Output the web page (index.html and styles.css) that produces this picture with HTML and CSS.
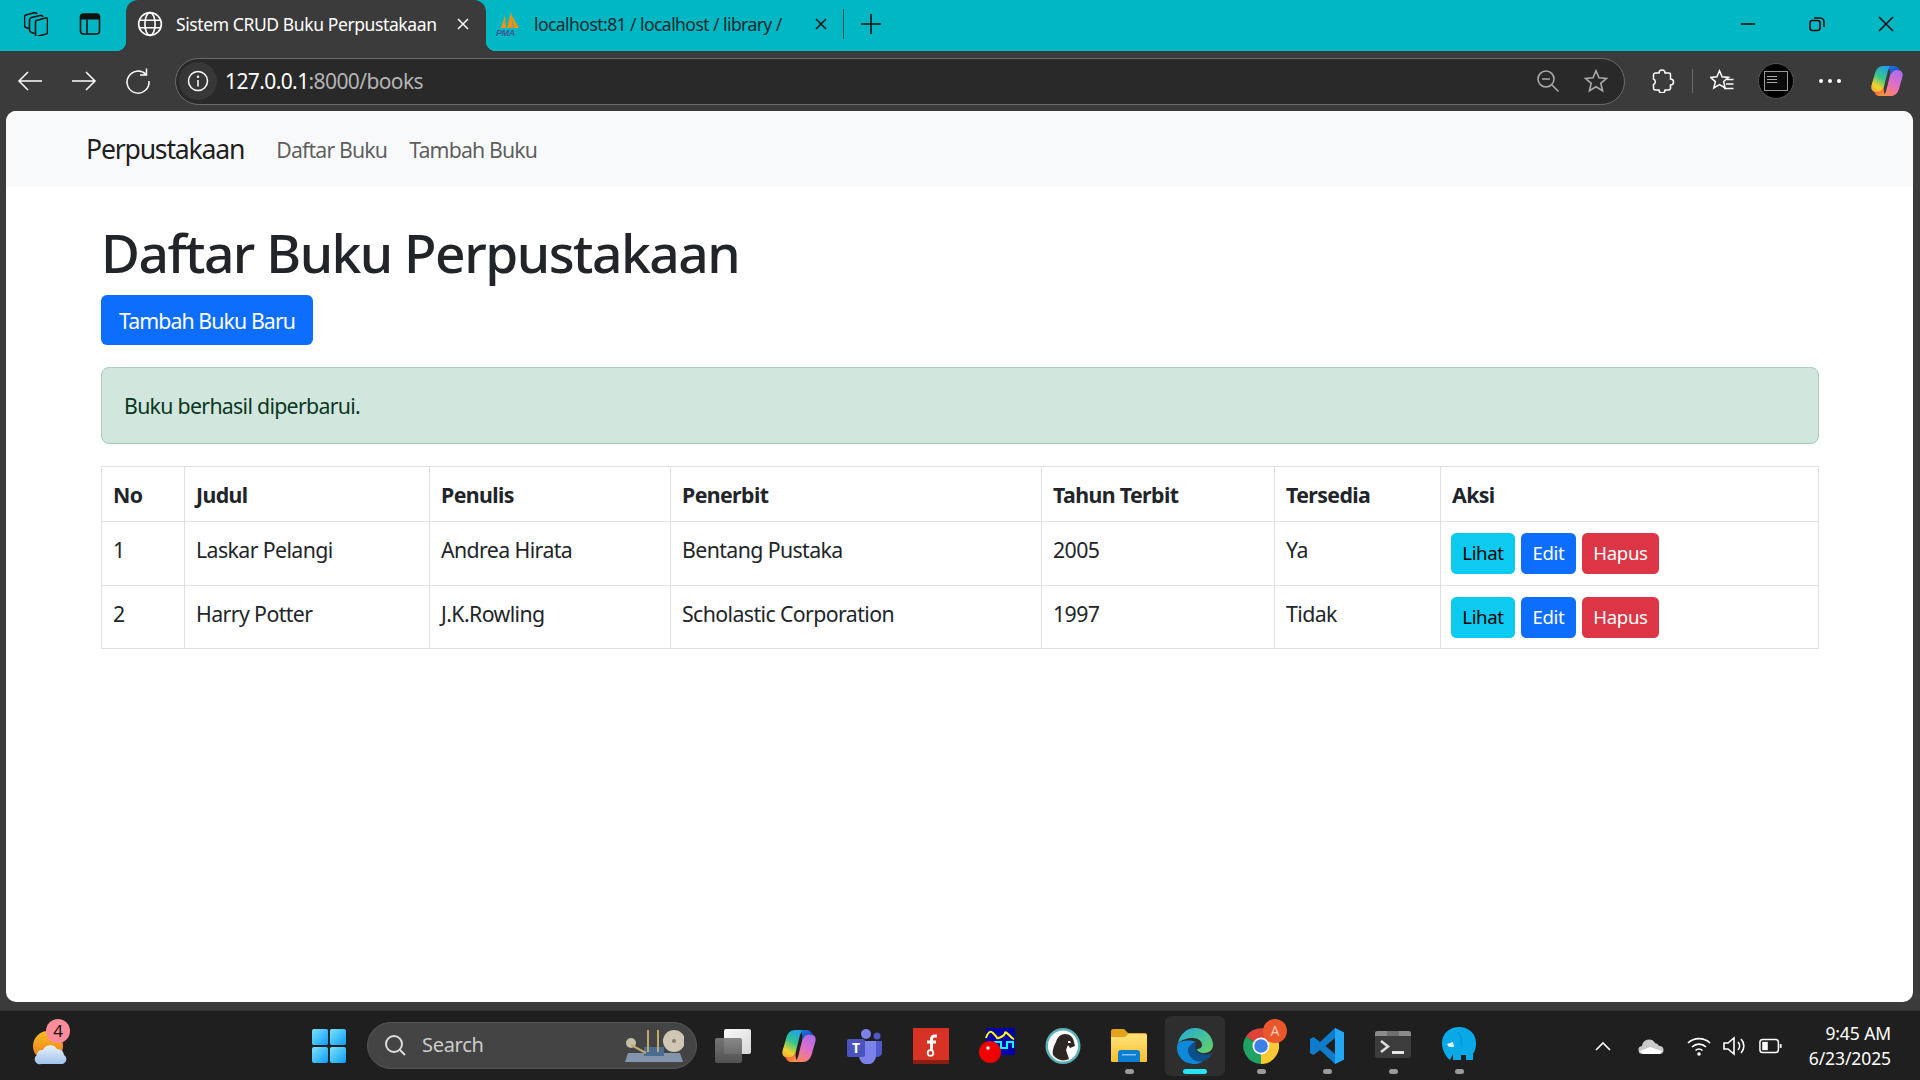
FILE: index.html
```html
<!DOCTYPE html>
<html lang="id">
<head>
<meta charset="utf-8">
<title>Sistem CRUD Buku Perpustakaan</title>
<link rel="stylesheet" href="styles.css">
</head>
<body>
<svg class="defs" width="0" height="0" aria-hidden="true">
  <defs>
    <linearGradient id="cpA" x1=".7" y1="0" x2=".2" y2="1"><stop offset="0" stop-color="#1d9df0"/><stop offset=".45" stop-color="#34c58f"/><stop offset=".8" stop-color="#f4d22a"/><stop offset="1" stop-color="#f7a93a"/></linearGradient>
    <linearGradient id="cpB" x1=".8" y1="0" x2=".3" y2="1"><stop offset="0" stop-color="#a56cf0"/><stop offset=".55" stop-color="#e46fc3"/><stop offset="1" stop-color="#fb8a55"/></linearGradient>
    <linearGradient id="cpD" x1="0" y1="0" x2="1" y2="1"><stop offset="0" stop-color="#1b7ae0"/><stop offset="1" stop-color="#1c3fb8"/></linearGradient>
    <linearGradient id="cpC" x1="0" y1="0" x2="1" y2="1"><stop offset="0" stop-color="#f2482f"/><stop offset="1" stop-color="#f8a24a"/></linearGradient>
    <linearGradient id="wn" x1="0" y1="0" x2="1" y2="1"><stop offset="0" stop-color="#79e4fb"/><stop offset="1" stop-color="#0f9bf5"/></linearGradient>
    <linearGradient id="eg" x1="0" y1="0" x2="1" y2="1"><stop offset="0" stop-color="#1fa9e0"/><stop offset="1" stop-color="#67d45e"/></linearGradient>
    <linearGradient id="sun" x1="0" y1="0" x2="0" y2="1"><stop offset="0" stop-color="#f9bd2a"/><stop offset="1" stop-color="#ee7412"/></linearGradient>
    <linearGradient id="cld" x1="0" y1="0" x2="0" y2="1"><stop offset="0" stop-color="#e9f2fc"/><stop offset="1" stop-color="#9fc1ee"/></linearGradient>
    <linearGradient id="fd" x1="0" y1="0" x2="0" y2="1"><stop offset="0" stop-color="#ffe27a"/><stop offset="1" stop-color="#f8c02c"/></linearGradient>
    <linearGradient id="tvA" x1="0" y1="0" x2="1" y2="1"><stop offset="0" stop-color="#fafafa"/><stop offset="1" stop-color="#d6d6d6"/></linearGradient>
    <linearGradient id="tvB" x1="0" y1="0" x2="0" y2="1"><stop offset="0" stop-color="#7d7d7d" stop-opacity=".9"/><stop offset="1" stop-color="#555" stop-opacity=".95"/></linearGradient>
    <symbol id="copilot" viewBox="0 0 36 36">
      <path d="M14 2H25C21 2 19.500 5 18.500 9L15 23C14 28 12 30 8 30 3 30 .5 27 1.500 23L5.500 9C7 5 9.500 2 14 2Z" fill="url(#cpA)"/>
      <path d="M22 34H11C15 34 16.500 31 17.500 27L21 13C22 8 24 6 28 6 33 6 35.500 9 34.500 13L30.500 27C29 31 26.500 34 22 34Z" fill="url(#cpB)"/>
      <path d="M20 2h5c3.500 0 6 2 6.500 5-4-1.500-8 0-10 5C21.500 8 21 4 20 2Z" fill="url(#cpD)"/>
      <path d="M16 34h-5c-3.500 0-6-2-6.500-5 4 1.500 8 0 10-5 0 4 .5 8 1.500 10Z" fill="url(#cpC)"/>
    </symbol>
  </defs>
</svg>

<div class="tabstrip">
  <button class="strip-btn" aria-label="Koleksi">
    <svg class="ico24" viewBox="0 0 24 24"><g class="ln-dark"><path d="M12.500 8.500l9-2.500q2-.5 2 1.500v12.500q0 1.500-1.500 2l-9 2.500q-1.500.3-1.500-1.500V10.500q0-1.500.5-2z"/><path d="M10.500 21.500l-3-1Q5.500 20 5.500 18V8q0-2 2-2.500L16 3.500q2-.5 3 1.500"/><path d="M5.500 16.500 2 15.500Q.5 15 .5 13V5q0-1.500 1.500-2L10 .8q2-.5 3 1.200"/></g></svg>
  </button>
  <button class="strip-btn" aria-label="Tab vertikal">
    <svg class="ico24" viewBox="0 0 24 24"><rect x="2.500" y="2" width="19" height="20" rx="3" class="ln-dark"/><path d="M2.500 7.500V5a3 3 0 0 1 3-3h13a3 3 0 0 1 3 3v2.500z" fill="#111"/><path d="M9 7.500V22" class="ln-dark"/></svg>
  </button>
  <div class="tab tab-active">
    <svg class="tab-fav" viewBox="0 0 24 24"><g class="ln-light"><circle cx="12" cy="12" r="10.500"/><ellipse cx="12" cy="12" rx="4.700" ry="10.500"/><path d="M2.200 8.500h19.600M2.200 15.500h19.600"/></g></svg>
    <span class="tab-title">Sistem CRUD Buku Perpustakaan</span>
    <svg class="ico-close" viewBox="0 0 14 14"><path d="M2 2l10 10M12 2 2 12" stroke="#fff" stroke-width="1.500"/></svg>
  </div>
  <div class="tab tab-idle">
    <svg class="pma" viewBox="0 0 26 26"><path d="M6 17 10 4l1 13zM12 17 16 1l2 16zM19 17l-3-14 8 14z" fill="#f29111"/><text x="1" y="25" class="pma-text">PMA</text></svg>
    <span class="tab-title tab-title-dark">localhost:81 / localhost / library /</span>
    <svg class="ico-close" viewBox="0 0 14 14"><path d="M2 2l10 10M12 2 2 12" stroke="#111" stroke-width="1.500"/></svg>
  </div>
  <span class="tab-sep"></span>
  <button class="new-tab" aria-label="Tab baru">
    <svg class="ico24" viewBox="0 0 24 24"><path d="M12 2v20M2 12h20" stroke="#111" stroke-width="1.600"/></svg>
  </button>
  <div class="win-controls">
    <button class="win-btn" aria-label="Minimalkan"><svg class="ico18" viewBox="0 0 18 18"><path d="M2 9h14" stroke="#111" stroke-width="1.600"/></svg></button>
    <button class="win-btn" aria-label="Pulihkan"><svg class="ico18" viewBox="0 0 18 18"><rect x="2" y="5.500" width="10" height="10" rx="2.500" fill="none" stroke="#111" stroke-width="1.600"/><path d="M6 3h6a4 4 0 0 1 4 4v5" fill="none" stroke="#111" stroke-width="1.600"/></svg></button>
    <button class="win-btn" aria-label="Tutup"><svg class="ico18" viewBox="0 0 18 18"><path d="M2 2l14 14M16 2 2 16" stroke="#111" stroke-width="1.600"/></svg></button>
  </div>
</div>

<div class="toolbar">
  <button class="tool-btn" aria-label="Kembali"><svg class="ico28" viewBox="0 0 28 28"><path d="M26 14H3M12 5l-9 9 9 9" class="ln-light"/></svg></button>
  <button class="tool-btn" aria-label="Maju"><svg class="ico28" viewBox="0 0 28 28"><path d="M2 14h23M16 5l9 9-9 9" class="ln-light"/></svg></button>
  <button class="tool-btn" aria-label="Muat ulang"><svg class="ico28" viewBox="0 0 28 28"><path d="M22 7.500A11 11 0 1 0 25 14" class="ln-light"/><path d="M22.500 1.500v6.500h-6.500" class="ln-light"/></svg></button>
  <div class="address">
    <span class="addr-info"><svg class="ico22" viewBox="0 0 22 22"><circle cx="11" cy="11" r="9.500" class="ln-light"/><path d="M11 10v6.500" class="ln-light"/><circle cx="11" cy="6.800" r="1.200" fill="#fff"/></svg></span>
    <span class="addr-host">127.0.0.1</span><span class="addr-path">:8000/books</span>
    <span class="addr-right">
      <svg class="ico24" viewBox="0 0 24 24"><g class="ln-grey"><circle cx="10" cy="10" r="8"/><path d="M6 10h8M16 16l6.500 6.500"/></g></svg>
      <svg class="ico24" viewBox="0 0 24 24"><path d="M12 1.800l3 7 7.500.6-5.700 4.900 1.800 7.400-6.600-4-6.600 4 1.800-7.400L1.500 9.400 9 8.800z" class="ln-grey"/></svg>
    </span>
  </div>
  <button class="tool-btn" aria-label="Ekstensi"><svg class="ico24" viewBox="2 0 24 24"><path d="M9 4a3 3 0 0 1 6 0h4a1.500 1.500 0 0 1 1.500 1.500V10a3 3 0 0 1 0 6v3.500A2 2 0 0 1 18.500 21H15a3 3 0 0 1-6 0H5.500A2 2 0 0 1 3.500 19v-3.500a3 3 0 0 0 0-5.500V6a2 2 0 0 1 2-2z" class="ln-light"/></svg></button>
  <span class="tool-sep"></span>
  <button class="tool-btn" aria-label="Favorit"><svg class="ico24" viewBox="0 0 24 24"><path d="M9.500 1.800l2.600 6 6.400.6-4.900 4.200 1.500 6.400-5.600-3.400-5.700 3.400 1.600-6.400L.5 8.400l6.400-.6zM17 10.500h6.500M16 15h7.500M14 19.500h9.500" class="ln-light"/></svg></button>
  <button class="tool-btn" aria-label="Profil"><span class="profile"><span class="profile-screen"><span class="profile-lines"></span></span></span></button>
  <button class="tool-btn" aria-label="Lainnya"><span class="dots"><i></i><i></i><i></i></span></button>
  <button class="tool-btn tool-copilot" aria-label="Copilot"><svg class="ico34"><use href="#copilot"/></svg></button>
</div>

<main class="page">
  <nav class="navbar">
    <a class="brand" href="#">Perpustakaan</a>
    <a class="nav-link" href="#">Daftar Buku</a>
    <a class="nav-link" href="#">Tambah Buku</a>
  </nav>
  <div class="content">
    <h1>Daftar Buku Perpustakaan</h1>
    <a class="btn btn-primary btn-lg" href="#">Tambah Buku Baru</a>
    <div class="alert">Buku berhasil diperbarui.</div>
    <table class="table">
      <colgroup>
        <col class="c1"><col class="c2"><col class="c3"><col class="c4"><col class="c5"><col class="c6"><col class="c7">
      </colgroup>
      <thead>
        <tr class="row-head"><th>No</th><th>Judul</th><th>Penulis</th><th>Penerbit</th><th>Tahun Terbit</th><th>Tersedia</th><th>Aksi</th></tr>
      </thead>
      <tbody>
        <tr class="row-a">
          <td>1</td><td>Laskar Pelangi</td><td>Andrea Hirata</td><td>Bentang Pustaka</td><td>2005</td><td>Ya</td>
          <td class="actions"><a class="btn btn-info" href="#">Lihat</a><a class="btn btn-primary" href="#">Edit</a><a class="btn btn-danger" href="#">Hapus</a></td>
        </tr>
        <tr class="row-b">
          <td>2</td><td>Harry Potter</td><td>J.K.Rowling</td><td>Scholastic Corporation</td><td>1997</td><td>Tidak</td>
          <td class="actions"><a class="btn btn-info" href="#">Lihat</a><a class="btn btn-primary" href="#">Edit</a><a class="btn btn-danger" href="#">Hapus</a></td>
        </tr>
      </tbody>
    </table>
  </div>
</main>
<div class="frame-bottom"></div>

<footer class="taskbar">
  <div class="weather">
    <svg class="ico38" viewBox="0 0 38 38"><circle cx="18" cy="19" r="15" fill="url(#sun)"/><path d="M11 37a5 5 0 0 1-4-9 5 5 0 0 1 6-5 8 8 0 0 1 14-1 6.500 6.500 0 0 1 7 6 5 5 0 0 1-1 9z" fill="url(#cld)"/></svg>
    <span class="weather-badge">4</span>
  </div>
  <div class="tb-item"><svg class="ico34" viewBox="0 0 36 36"><g fill="url(#wn)"><rect x="0" y="0" width="17" height="17" rx="2"/><rect x="19" y="0" width="17" height="17" rx="2"/><rect x="0" y="19" width="17" height="17" rx="2"/><rect x="19" y="19" width="17" height="17" rx="2"/></g></svg></div>
  <div class="search">
    <svg class="ico22 search-ico" viewBox="0 0 22 22"><circle cx="10" cy="10" r="8" fill="none" stroke="#ddd" stroke-width="2"/><path d="M16 16l5 5" stroke="#ddd" stroke-width="2"/></svg>
    <span class="search-text">Search</span>
    <svg class="search-art" viewBox="0 0 60 36"><path d="M4 26h52l3 9H1z" fill="#8295ad"/><rect x="20" y="20" width="20" height="9" fill="#4b6d94"/><circle cx="50" cy="14" r="11" fill="#cfc7b3"/><circle cx="50" cy="14" r="2" fill="#887e6a"/><circle cx="7" cy="16" r="5" fill="#c6bda8"/><path d="M7 18l15 8M24 3v22M34 3v22" stroke="#bca96e" stroke-width="2"/></svg>
  </div>
  <div class="tb-apps">
    <div class="tb-item"><svg class="ico36" viewBox="0 0 36 36"><rect x="9" y="1" width="27" height="25" rx="2" fill="url(#tvA)"/><rect x="0" y="10" width="27" height="25" rx="2" fill="url(#tvB)"/></svg></div>
    <div class="tb-item"><svg class="ico36"><use href="#copilot"/></svg></div>
    <div class="tb-item"><svg class="ico36" viewBox="0 0 36 36"><circle cx="19" cy="6" r="5" fill="#7b83eb"/><circle cx="30" cy="8" r="3.500" fill="#5059c9"/><path d="M25 13h10v11a5 5 0 0 1-9 3z" fill="#5059c9"/><path d="M12 13h17v15a8.500 8.500 0 0 1-17 0z" fill="#7b83eb"/><rect x="0" y="11" width="18" height="18" rx="2" fill="#4b53bc"/><text x="9" y="25" class="teams-t">T</text></svg></div>
    <div class="tb-item"><svg class="ico36" viewBox="0 0 36 36"><rect width="36" height="36" fill="#d63324"/><rect y="32" width="36" height="4" fill="#8c1d14"/><path d="M24 8h-2.500a3 3 0 0 0-3 3v12M14 14h9" stroke="#fff" stroke-width="3" fill="none"/><circle cx="17.500" cy="25" r="2.800" fill="none" stroke="#fff" stroke-width="1.800"/></svg></div>
    <div class="tb-item"><svg class="ico36" viewBox="0 0 36 36"><rect x="7" width="29" height="27" fill="#0000a8"/><path d="M7 10q3-9 7-5t4 5 4-1 4-4 4 2 5 4" stroke="#ff0" stroke-width="2" fill="none"/><path d="M16 20v-6h6v6h6v-6h6v6" stroke="#0ff" stroke-width="2" fill="none"/><circle cx="11" cy="24" r="11" fill="#f00000"/><circle cx="9" cy="20" r="1.800" fill="#fff"/></svg></div>
    <div class="tb-item"><svg class="ico36" viewBox="0 0 36 36"><ellipse cx="18" cy="18" rx="17.500" ry="18" fill="#5bb3b8"/><ellipse cx="18" cy="18" rx="15" ry="15.500" fill="#fff"/><path d="M8 27c-1-5 1-9 3-13 1-4 4-8 9-8 5 0 8 3 9 8l1 4-5 2-2-3-2 5 3 9c-6 3-12 1-16-4z" fill="#2e2622"/><path d="M23 13l2 0 1 2-3 0z" fill="#fff"/></svg></div>
    <div class="tb-item tb-open"><svg class="ico36" viewBox="0 0 36 36"><path d="M0 3a2 2 0 0 1 2-2h11l4 4h17a2 2 0 0 1 2 2v26H0z" fill="#e3a21a"/><path d="M0 9h14l3-3h17a2 2 0 0 1 2 2v25a1 1 0 0 1-1 1H1a1 1 0 0 1-1-1z" fill="url(#fd)"/><path d="M7 34V25a3 3 0 0 1 3-3h16a3 3 0 0 1 3 3v9z" fill="#0f7dd0"/><rect x="11" y="26" width="14" height="1.500" fill="#7fc3f2"/></svg></div>
    <div class="tb-item tb-active"><svg class="ico36" viewBox="0 0 36 36"><path d="M1 15C3 6 10 0 18 0c10 0 18 8 18 17 0 5-4 8-9 8-4 0-7-2-7-4 2 0 5-1 5-4 0-4-4-7-9-7-6 0-12 2-15 5z" fill="url(#eg)"/><path d="M1 15C-1 19 0 25 3 29c3 5 9 7 15 7 3 0 6-1 8-3-7 1-12-3-14-8-1-5 2-10 7-11-7-3-15-1-18 1z" fill="#0f88d8"/><path d="M11 22c0 7 7 13 15 11 4-1 8-4 9-8-3 2-6 2-9 1-6 0-9-4-7-11-5 1-8 4-8 7z" fill="#0b4f8a"/></svg></div>
    <div class="tb-item tb-open"><span class="chrome-wrap"><svg class="ico36" viewBox="0 0 36 36"><path d="M18 18 3 8.500A18 18 0 0 1 33.600 9z" fill="#dd4437"/><path d="M18 18 3 8.500A18 18 0 0 0 18 36z" fill="#1ea362"/><path d="M18 18 33.600 9A18 18 0 0 1 18 36z" fill="#fcc934"/><circle cx="18" cy="18" r="8.500" fill="#fff"/><circle cx="18" cy="18" r="6.800" fill="#3f7fe8"/></svg><span class="chrome-badge">A</span></span></div>
    <div class="tb-item tb-open"><svg class="ico36" viewBox="0 0 36 36"><path fill-rule="evenodd" d="M26 0 35 4.500V31.500L26 36 11 22 4.500 27 1 25V11L4.500 9 11 14ZM26 10 16.500 18 26 26Z" fill="#0e7ccb"/><path d="M26 0 35 4.500V31.500L26 36z" fill="#24a7f2"/></svg></div>
    <div class="tb-item tb-open"><svg class="ico-term" viewBox="0 0 36 27"><rect width="36" height="27" rx="2.500" fill="#3c3c3c"/><path d="M0 2.500A2.500 2.500 0 0 1 2.500 0h31A2.500 2.500 0 0 1 36 2.500V5H0z" fill="#8b8b8b"/><path d="M12 0h12v5H12z" fill="#6f6f6f"/><path d="M6 10l7 5.500-7 5.500" stroke="#ddd" stroke-width="2.500" fill="none"/><path d="M17 21.500h12" stroke="#eee" stroke-width="2.800"/></svg></div>
    <div class="tb-item tb-open"><svg class="ico36 elephant" viewBox="0 0 36 36"><path d="M1 17C1 7 9 1 18 1s17 6 17 16c0 5-1 8-3 11v6h-7v-5h-5v5h-8v-6l-3 6c-3-2-8-9-8-17z" fill="#09a9e8"/><path d="M17 6c3 3 4 8 3 13" stroke="#0a8ccc" fill="none"/><path d="M6 18l6-2 1 5-5 0z" fill="#e6f7ff"/></svg></div>
  </div>
  <div class="tray">
    <svg class="tray-ico tray-chev" viewBox="0 0 20 20"><path d="M3 14l7-7 7 7" class="ln-tray"/></svg>
    <svg class="tray-cloud" viewBox="0 0 26 18"><path d="M5 17a4 4 0 0 1-1-8 7 7 0 0 1 13-3 5 5 0 0 1 4 3 4 4 0 0 1 1 8z" fill="#c9c9c9"/><path d="M2 14l10-4 12 4-2 3H5z" fill="#fff"/></svg>
    <svg class="tray-ico" viewBox="0 0 24 20"><g class="ln-tray"><path d="M1 7a16 16 0 0 1 22 0M5 11a10 10 0 0 1 14 0M8.500 14.500a5 5 0 0 1 7 0"/></g><circle cx="12" cy="18" r="1.800" fill="#fff"/></svg>
    <svg class="tray-ico" viewBox="0 0 24 20"><g class="ln-tray"><path d="M1 7v6h4l6 5V2L5 7zM15 6a6 6 0 0 1 0 8M18 3a10 10 0 0 1 0 14"/></g></svg>
    <svg class="tray-ico tray-batt" viewBox="0 0 26 18"><rect x="1" y="2" width="20" height="14" rx="3" class="ln-tray"/><rect x="3.500" y="4.500" width="6" height="9" fill="#fff"/><rect x="22.500" y="7" width="2" height="4" fill="#fff"/></svg>
    <div class="clock"><span>9:45 AM</span><span>6/23/2025</span></div>
  </div>
</footer>
</body>
</html>
```

FILE: styles.css
```css
* { box-sizing: border-box; }
html, body { margin: 0; padding: 0; }
body {
  width: 1920px;
  height: 1080px;
  overflow: hidden;
  display: flex;
  flex-direction: column;
  background: #3b3b3b;
  font-family: "Noto Sans", "Open Sans", sans-serif;
  color: #212529;
}
button { background: none; border: 0; padding: 0; margin: 0; display: flex; align-items: center; justify-content: center; }
a { text-decoration: none; }
svg { display: block; flex: none; }
.defs { position: absolute; }
.ico18 { width: 18px; height: 18px; }
.ico22 { width: 22px; height: 22px; }
.ico24 { width: 24px; height: 24px; }
.ico28 { width: 28px; height: 28px; }
.ico34 { width: 34px; height: 34px; }
.ico36 { width: 36px; height: 36px; }
.ico38 { width: 38px; height: 38px; }
.ico-term { width: 36px; height: 27px; margin-top: -2px; }
.elephant { margin-top: -4px; }
.ln-dark { fill: none; stroke: #111; stroke-width: 1.6; }
.ln-light { fill: none; stroke: #fff; stroke-width: 1.5; }
.ln-grey { fill: none; stroke: #a9a9a9; stroke-width: 1.6; }
.ln-tray { fill: none; stroke: #fff; stroke-width: 1.6; }

/* tab strip */
.tabstrip {
  height: 51px;
  flex: none;
  display: flex;
  padding-left: 9px;
  background: #00b7c3;
}
.strip-btn { width: 54px; height: 48px; }
.tab { display: flex; align-items: center; height: 51px; width: 360px; font-size: 17.5px; letter-spacing: -.4px; }
.tab-active {
  position: relative;
  margin-left: 9px;
  padding: 0 16px 3px 11px;
  background: #3b3b3b;
  border-radius: 12px 12px 0 0;
  color: #fff;
}
.tab-active::before, .tab-active::after {
  content: "";
  position: absolute;
  bottom: 0;
  width: 10px;
  height: 10px;
}
.tab-active::before { left: -10px; background: radial-gradient(circle at 0 0, transparent 10px, #3b3b3b 10.5px); }
.tab-active::after { right: -10px; background: radial-gradient(circle at 100% 0, transparent 10px, #3b3b3b 10.5px); }
.tab-fav { width: 26px; height: 26px; margin-right: 13px; }
.tab-title { flex: 1; white-space: nowrap; overflow: hidden; }
.tab-title-dark { color: #0e2b2f; letter-spacing: -.55px; }
.ico-close { width: 14px; height: 14px; }
.tab-idle { width: 352px; padding: 0 10px 3px 9px; color: #111; }
.pma { width: 26px; height: 26px; margin-right: 13px; }
.pma-text { font: italic 700 9px "Liberation Sans", sans-serif; fill: #3d5a98; }
.tab-sep { width: 1px; height: 30px; margin: 9px 0 0 5px; background: #17545a; }
.new-tab { width: 54px; height: 48px; }
.win-controls { margin-left: auto; display: flex; }
.win-btn { width: 69px; height: 48px; }

/* toolbar */
.toolbar {
  height: 60px;
  flex: none;
  display: flex;
  align-items: center;
  padding: 0 6px 0 3px;
  background: #3b3b3b;
}
.tool-btn { width: 54px; height: 48px; }
.address {
  flex: 1;
  height: 47px;
  margin: 0 12px 0 10px;
  display: flex;
  align-items: center;
  padding-left: 3px;
  border: 1.5px solid #6c6c6c;
  border-radius: 24px;
  background: #292929;
  font-size: 21px;
  letter-spacing: -.6px;
}
.addr-info { width: 38px; height: 38px; margin-right: 8px; border-radius: 50%; background: #373737; display: flex; align-items: center; justify-content: center; }
.addr-host { color: #fff; }
.addr-path { color: #b4b4b4; }
.addr-right { margin-left: auto; display: flex; gap: 24px; padding-right: 16px; }
.tool-sep { width: 1px; height: 24px; margin: 0 2px 0 1px; background: #6a6a6a; }
.profile { width: 36px; height: 36px; border-radius: 50%; background: #000; border: 1px solid #555; display: flex; align-items: center; justify-content: center; }
.profile-screen { width: 24px; height: 20px; border: 1px solid #999; background: #0a0a0a; display: flex; padding: 4px 2px; }
.profile-lines { width: 10px; height: 9px; background: repeating-linear-gradient(#aaa 0 1px, transparent 1px 3px); }
.dots { display: flex; gap: 5px; }
.dots i { width: 4px; height: 4px; border-radius: 50%; background: #fff; }
.tool-copilot { margin-left: 3px; }

/* page */
.page {
  flex: none;
  height: 891px;
  margin: 0 7px 0 6px;
  background: #fff;
  border-radius: 10px;
  overflow: hidden;
}
.frame-bottom { height: 8px; flex: none; background: #3b3b3b; }
.navbar {
  height: 76px;
  display: flex;
  align-items: center;
  padding-left: 80px;
  background: #f8f9fa;
}
.brand { font-size: 26.6px; letter-spacing: -1.2px; color: rgba(0,0,0,.9); margin-right: 32px; }
.nav-link { font-size: 21.3px; letter-spacing: -.85px; color: rgba(0,0,0,.65); margin-right: 22px; }
.content { padding: 34px 94px 0 95px; font-size: 21.3px; letter-spacing: -.6px; }
h1 { margin: 0 0 10px; font-size: 53.3px; line-height: 64px; font-weight: 500; letter-spacing: -1.5px; }
.btn { display: inline-flex; align-items: center; justify-content: center; border-radius: 5.3px; }
.btn-lg { height: 50px; width: 212px; border-radius: 6px; letter-spacing: -.9px; }
.btn-primary { background: #0d6efd; color: #fff; }
.btn-info { background: #0dcaf0; color: #000; }
.btn-danger { background: #dc3545; color: #fff; }
.alert {
  margin: 22px 0;
  height: 77px;
  padding-left: 22px;
  display: flex;
  align-items: center;
  border: 1px solid #a3cfbb;
  border-radius: 8px;
  background: #d1e7dd;
  color: #0a3622;
  letter-spacing: -.7px;
}
.table { width: 1717px; table-layout: fixed; border-collapse: collapse; }
.c1 { width: 83px; } .c2 { width: 245px; } .c3 { width: 241px; } .c4 { width: 371px; }
.c5 { width: 233px; } .c6 { width: 166px; } .c7 { width: 378px; }
th, td { border: 1.33px solid #dee2e6; padding: 12px 11px 0; text-align: left; vertical-align: top; line-height: 32px; }
th { font-weight: 700; letter-spacing: -.6px; }
.row-head { height: 55px; }
.row-a { height: 64px; }
.row-b { height: 63px; }
.actions { padding: 11px 11px 0 10px; font-size: 18.6px; letter-spacing: -.35px; line-height: 1; }
.actions .btn { height: 41px; margin-right: 6px; }
.actions .btn-info { width: 64px; }
.actions .btn-primary { width: 55px; }
.actions .btn-danger { width: 77px; }

/* taskbar */
.taskbar {
  height: 70px;
  flex: none;
  display: flex;
  align-items: center;
  background: #1f1f1f;
  border-top: 1px solid #333;
}
.weather { position: relative; width: 296px; padding-left: 30px; }
.weather-badge {
  position: absolute;
  left: 46px;
  top: -8px;
  width: 24px;
  height: 24px;
  border-radius: 50%;
  background: #ff8d99;
  color: #111;
  font-size: 17px;
  line-height: 24px;
  text-align: center;
}
.tb-item { position: relative; width: 66px; height: 60px; display: flex; align-items: center; justify-content: center; border-radius: 6px; }
.search {
  width: 330px;
  height: 47px;
  margin: 0 3px 0 5px;
  display: flex;
  align-items: center;
  padding: 0 12px 2px 16px;
  border-radius: 24px;
  border: 1px solid #555;
  background: #444;
  color: #ccc;
  font-size: 20px;
  letter-spacing: -.3px;
}
.search-ico { margin-right: 16px; }
.search-art { width: 60px; height: 36px; margin-left: auto; }
.tb-apps { display: flex; align-items: center; }
.tb-open::after {
  content: "";
  position: absolute;
  left: 28.5px;
  bottom: 2px;
  width: 9px;
  height: 5px;
  border-radius: 3px;
  background: #9a9a9a;
}
.tb-active { background: #2e2e2e; width: 60px; margin: 0 3px; }
.tb-active::before {
  content: "";
  position: absolute;
  left: 18px;
  bottom: 2px;
  width: 24px;
  height: 5px;
  border-radius: 3px;
  background: #27e4f5;
}
.teams-t { font: 700 14px "Noto Sans", sans-serif; fill: #fff; text-anchor: middle; }
.chrome-wrap { position: relative; }
.chrome-badge {
  position: absolute;
  right: -8px;
  top: -9px;
  width: 24px;
  height: 24px;
  border-radius: 50%;
  background: #e9572b;
  color: #ffc9b8;
  font-size: 14px;
  line-height: 24px;
  text-align: center;
}
.tray { margin-left: auto; display: flex; align-items: center; padding-right: 29px; color: #fff; }
.tray-ico { width: 24px; height: 20px; margin-right: 12px; }
.tray-chev { margin-right: 0; }
.tray-batt { margin-right: 0; }
.tray-cloud { width: 26px; height: 18px; margin: 0 23px; }
.clock { width: 108px; display: flex; flex-direction: column; align-items: flex-end; font-size: 17.5px; line-height: 25px; letter-spacing: -.1px; }
```
